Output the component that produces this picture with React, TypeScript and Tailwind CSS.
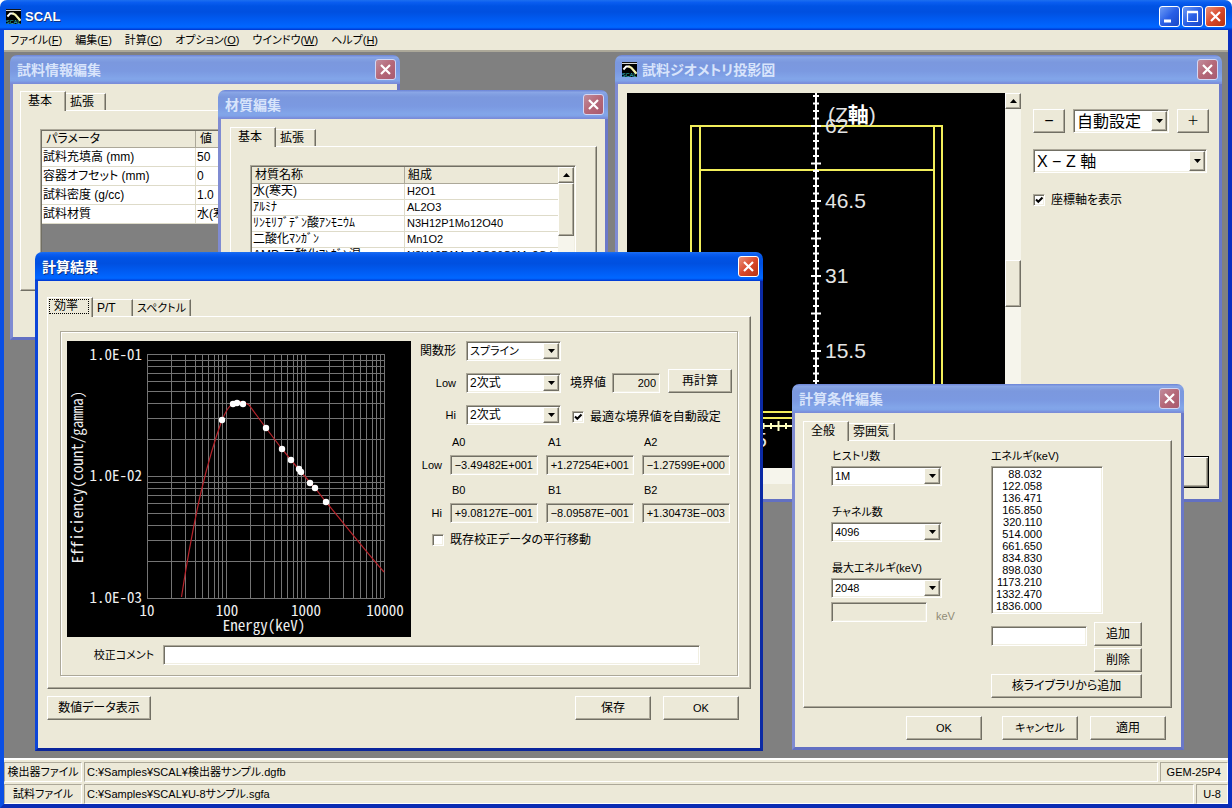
import React, { ReactNode, useState } from "react";

const sunken =
  "border border-t-[#aca899] border-l-[#aca899] border-r-white border-b-white shadow-[inset_1px_1px_0_#716f64,inset_-1px_-1px_0_#f1efe2]";
const raised =
  "border border-t-white border-l-white border-r-[#716f64] border-b-[#716f64] shadow-[inset_-1px_-1px_0_#aca899]";

const activeTitle =
  "bg-[linear-gradient(180deg,#1c6ff0,#0a5df0_8%,#0053e4_20%,#0050e0_40%,#005df5_70%,#0066ff_88%,#0061fa_93%,#003dd7_97%,#003dd7)]";
const inactiveTitle =
  "bg-[linear-gradient(180deg,#6b83d6,#8aa6e6_8%,#82a0e2_14%,#7b98de_25%,#7b99e1_56%,#82a5e9_81%,#80a3e8_89%,#7b92de_95%,#7a8ad6)]";

function CloseGlyph() {
  return (
    <svg viewBox="0 0 19 19" className="size-full" aria-hidden="true">
      <path d="M5 5l9 9M14 5l-9 9" stroke="#fff" strokeWidth="2.2" />
    </svg>
  );
}

function CloseButton({ active }: { active?: boolean }) {
  return (
    <button
      type="button"
      aria-label="閉じる"
      className={
        active
          ? "size-[21px] shrink-0 rounded-[3px] border border-white bg-linear-to-br from-[#e89078] via-[#d9482a] to-[#b8330f]"
          : "size-[21px] shrink-0 rounded-[3px] border border-[#d3d7f4] bg-linear-to-br from-[#c08c9c] via-[#b56878] to-[#a85a70]"
      }
    >
      <CloseGlyph />
    </button>
  );
}

function AppIcon() {
  return (
    <svg viewBox="0 0 16 16" className="size-[15px] shrink-0" aria-hidden="true">
      <rect width="16" height="16" fill="#000" />
      <path d="M0 1.5h16" stroke="#fff" strokeWidth="1" />
      <path d="M1.500 8L4.500 4.800H7.500" stroke="#fff" strokeWidth="2" fill="none" />
      <path d="M7 4.600l3 1.600L15.500 12.500" stroke="#f6f2b0" strokeWidth="2.400" fill="none" />
      <text x="0" y="15.6" fontSize="6" fill="#3fd0d8" fontFamily="Liberation Sans, sans-serif">
        SCAL
      </text>
    </svg>
  );
}

type WinProps = {
  title: string;
  active?: boolean;
  icon?: boolean;
  place: string;
  body: string;
  children: ReactNode;
};

function Win({ title, active, icon, place, body, children }: WinProps) {
  return (
    <section aria-label={title} className={"absolute flex flex-col " + place}>
      <header
        className={
          "flex h-[29px] shrink-0 items-center justify-between rounded-t-[7px] pr-1 pl-[7px] " +
          (active ? activeTitle : inactiveTitle)
        }
      >
        <div className="flex items-center gap-[5px]">
          {icon && <AppIcon />}
          <h2
            className={
              active
                ? "text-sm leading-5 font-bold text-white [text-shadow:1px_1px_#10327e]"
                : "text-sm leading-5 font-bold text-[#d8e4fb]"
            }
          >
            {title}
          </h2>
        </div>
        <CloseButton active={active} />
      </header>
      <div
        className={
          "flex flex-1 border-x-[3px] border-b-[3px] bg-[#ece9d8] " +
          (active
            ? "border-l-[#0c45d8] border-r-[#0b2aa5] border-b-[#0a259c] "
            : "border-l-[#7f8bd2] border-r-[#6a78c8] border-b-[#6270c2] ") +
          body
        }
      >
        {children}
      </div>
    </section>
  );
}

function Tabs({ tabs, focus }: { tabs: { name: string; size: string }[]; focus?: boolean }) {
  return (
    <div role="tablist" className="flex h-[19px] items-end">
      {tabs.map((t, i) => (
        <button
          key={t.name}
          type="button"
          role="tab"
          aria-selected={i === 0}
          className={
            "bg-[#ece9d8] " +
            t.size +
            (i === 0
              ? " relative -mb-px flex h-[20px] items-start border-t border-r border-l border-t-white border-r-[#716f64] border-l-white pt-px shadow-[inset_-1px_0_0_#aca899]"
              : " h-[17px] border-t border-r border-t-white border-r-[#716f64] pl-1 text-left shadow-[inset_-1px_0_0_#aca899]")
          }
        >
          <span
            className={
              i === 0 && focus
                ? "mr-[2px] w-full border border-dotted border-black pl-1 text-left leading-[13px]"
                : i === 0
                  ? "pl-[7px] leading-4"
                  : "leading-4"
            }
          >
            {t.name}
          </span>
        </button>
      ))}
    </div>
  );
}

function Button({ children, size }: { children: ReactNode; size: string }) {
  return (
    <button type="button" className={"h-6 shrink-0 bg-[#ece9d8] leading-5 " + raised + " " + size}>
      {children}
    </button>
  );
}

function Combo({ id, label, options, size, text }: { id: string; label: string; options: string[]; size: string; text: string }) {
  return (
    <div className={"relative bg-white p-[2px] " + sunken + " " + size}>
      <select id={id} aria-label={label} className={"block h-full w-full appearance-none bg-white pl-px outline-none " + text}>
        {options.map((o) => (
          <option key={o}>{o}</option>
        ))}
      </select>
      <span
        aria-hidden="true"
        className={"pointer-events-none absolute top-px right-px bottom-px flex w-4 items-center justify-center bg-[#ece9d8] " + raised}
      >
        <svg viewBox="0 0 7 4" className="h-1 w-[7px]">
          <path d="M0 0h7L3.500 4z" fill="#000" />
        </svg>
      </span>
    </div>
  );
}

function Check({ label, initial }: { label: string; initial?: boolean }) {
  const [on, setOn] = useState(!!initial);
  return (
    <label className="flex h-4 items-center gap-[6px] whitespace-nowrap">
      <span className="relative size-3 shrink-0">
        <input
          type="checkbox"
          checked={on}
          onChange={() => setOn(!on)}
          className={"block size-3 appearance-none bg-white " + sunken}
        />
        {on && (
          <svg viewBox="0 0 12 12" className="pointer-events-none absolute inset-0 size-3" aria-hidden="true">
            <path d="M3 5.500l2.300 2.300L9.500 3.500" stroke="#000" strokeWidth="2" fill="none" />
          </svg>
        )}
      </span>
      {label}
    </label>
  );
}

function UpArrow() {
  return (
    <div className={"flex size-4 shrink-0 items-center justify-center bg-[#ece9d8] " + raised}>
      <svg viewBox="0 0 7 4" className="h-1 w-[7px]" aria-hidden="true">
        <path d="M0 4h7L3.500 0z" fill="#000" />
      </svg>
    </div>
  );
}

function SampleWindow() {
  const rows = [
    ["試料充填高 (mm)", "50"],
    ["容器オフセット (mm)", "0"],
    ["試料密度 (g/cc)", "1.0"],
    ["試料材質", "水(寒天)"],
  ];
  return (
    <Win title="試料情報編集" place="left-[6px] top-[3px] h-[285px] w-[390px]" body="flex-col pt-[7px] pr-[7px] pb-[46px] pl-[7px]">
      <Tabs tabs={[{ name: "基本", size: "w-[46px]" }, { name: "拡張", size: "w-[40px]" }]} />
      <div className={"flex flex-1 pt-[18px] pr-5 pb-5 pl-[19px] " + raised}>
        <div className={"flex-1 bg-[#808080] p-px " + sunken}>
          <table className="w-full table-fixed border-separate border-spacing-0 text-left">
            <thead>
              <tr className="h-[17px] bg-[#ece9d8]">
                <th className="w-[154px] border-r border-b border-[#aca899] py-0 pr-0 pl-1 leading-4 font-normal">パラメータ</th>
                <th className="border-b border-[#aca899] py-0 pr-0 pl-1 leading-4 font-normal">値</th>
              </tr>
            </thead>
            <tbody>
              {rows.map(([k, v]) => (
                <tr key={k} className="h-[19px] bg-white">
                  <td className="border-r border-b border-[#dedbc9] py-0 pr-0 pl-px leading-4">{k}</td>
                  <td className="border-b border-[#dedbc9] py-0 pr-0 pl-px leading-4">{v}</td>
                </tr>
              ))}
            </tbody>
          </table>
        </div>
      </div>
    </Win>
  );
}

function MaterialWindow() {
  const rows = [
    ["水(寒天)", "H2O1"],
    ["ｱﾙﾐﾅ", "AL2O3"],
    ["ﾘﾝﾓﾘﾌﾞﾃﾞﾝ酸ｱﾝﾓﾆｳﾑ", "N3H12P1Mo12O40"],
    ["二酸化ﾏﾝｶﾞﾝ", "Mn1O2"],
    ["AMP-二酸化ﾏﾝｶﾞﾝ混", "N3H12P1Mo12O86C3Mn2O4"],
  ];
  return (
    <Win title="材質編集" place="left-[214px] top-[38px] h-[240px] w-[390px]" body="flex-col pt-2 pr-2 pb-5 pl-[9px]">
      <Tabs tabs={[{ name: "基本", size: "w-[46px]" }, { name: "拡張", size: "w-[40px]" }]} />
      <div className={"flex flex-1 pt-[18px] pr-5 pb-2 pl-[19px] " + raised}>
        <div className={"flex flex-1 items-start bg-white p-px " + sunken}>
          <table className="flex-1 table-fixed border-separate border-spacing-0 text-left">
            <thead>
              <tr className="h-[17px] bg-[#ece9d8]">
                <th className="w-[153px] border-r border-b border-[#aca899] py-0 pr-0 pl-[3px] leading-4 font-normal">材質名称</th>
                <th className="border-b border-[#aca899] py-0 pr-0 pl-[3px] leading-4 font-normal">組成</th>
              </tr>
            </thead>
            <tbody>
              {rows.map(([k, v]) => (
                <tr key={k} className="h-4">
                  <td className="border-r border-b border-[#dedbc9] py-0 pr-0 pl-px leading-[15px] whitespace-nowrap">{k}</td>
                  <td className="border-b border-[#dedbc9] py-0 pr-0 pl-[2px] text-[11px] leading-[15px]">{v}</td>
                </tr>
              ))}
            </tbody>
          </table>
          <div className="flex w-4 flex-col self-stretch bg-[#f6f5ec]">
            <UpArrow />
            <div className={"h-[53px] w-4 bg-[#ece9d8] " + raised} />
          </div>
        </div>
      </div>
    </Win>
  );
}

const ticksZ = Array.from({ length: 45 }, (_, i) => i);
const ticksX = Array.from({ length: 49 }, (_, i) => i - 24);

function Projection() {
  return (
    <svg viewBox="0 0 378 375" className="block h-[375px] w-[378px] bg-black" role="img" aria-label="X-Z 投影図">
      <g stroke="#f2ee5a" strokeWidth="2" fill="none">
        <path d="M64 325V33H315V325Z" />
        <path d="M73 33V319H307V33M73 77H307" />
      </g>
      <g stroke="#fff" strokeWidth="2">
        <path d="M189 0V375" />
        <path d="M0 333H378" stroke="#ffffc0" />
        {ticksZ.map((i) => {
          const y = 333 - i * 7.5;
          const r = i % 5 === 0 ? 5 : 3;
          return <path key={i} d={`M${189 - r} ${y}H${189 + r}`} />;
        })}
        {ticksX.map((i) => {
          const x = 189 + i * 7.5;
          const r = i % 5 === 0 ? 5 : 3;
          return <path key={i} d={`M${x} ${333 - r}V${333 + r}`} stroke="#ffffc0" />;
        })}
      </g>
      <g fill="#e4e4e4" fontSize="21" fontFamily="Liberation Sans, Noto Sans CJK JP, sans-serif">
        <text x="201" y="29">
          (Z
          <tspan fill="#fff" fontWeight="700">軸</tspan>)
        </text>
        <text x="198" y="40">62</text>
        <text x="198" y="115">46.5</text>
        <text x="198" y="190">31</text>
        <text x="198" y="265">15.5</text>
        <text x="140" y="354" textAnchor="end">-15.5</text>
      </g>
    </svg>
  );
}

function GeometryWindow() {
  return (
    <Win title="試料ジオメトリ投影図" icon place="left-[611px] top-[3px] h-[447px] w-[607px]" body="justify-between pt-[9px] pr-[10px] pb-[11px] pl-[9px]">
      <div className="flex flex-col">
        <div className="flex">
          <Projection />
          <div className="flex w-4 flex-col bg-[#f6f5ec]">
            <UpArrow />
            <div className="h-[151px]" />
            <div className={"h-[47px] w-4 bg-[#ece9d8] " + raised} />
          </div>
        </div>
        <div className="flex h-4 w-[378px] justify-center bg-[#f6f5ec]">
          <div className={"w-12 bg-[#ece9d8] " + raised} />
        </div>
      </div>
      <div className="flex w-[176px] flex-col pt-4">
        <div className="flex justify-between">
          <Button size="w-8 text-base">−</Button>
          <Combo id="scale" label="倍率" options={["自動設定"]} size="h-6 w-24" text="text-base leading-5" />
          <Button size="w-8">＋</Button>
        </div>
        <Combo id="plane" label="投影面" options={["X − Z 軸"]} size="mt-4 mr-[2px] h-6" text="text-base leading-5" />
        <div className="mt-[19px]">
          <Check label="座標軸を表示" initial />
        </div>
        <button type="button" className="mt-auto h-8 w-[100px] self-end border border-black bg-[#ece9d8] shadow-[inset_1px_1px_0_#fff,inset_-1px_-1px_0_#716f64,inset_-2px_-2px_0_#aca899]">
          閉じる
        </button>
      </div>
    </Win>
  );
}

const PX = 80;
const PY = 13;
const DX = 79;
const DY = 122;
const decadesX = [0, 1, 2];
const decadesY = [0, 1];
const mantissa = [1, 2, 3, 4, 5, 6, 7, 8, 9];
const points = [
  [155, 79], [166, 63], [170, 62], [176, 63], [199, 87], [215, 108],
  [224, 119], [232, 128], [234, 131], [243, 142], [248, 147], [259, 161],
];

function EfficiencyPlot() {
  return (
    <svg viewBox="0 0 344 296" className="block h-[296px] w-[344px] shrink-0 bg-black" role="img" aria-label="効率曲線">
      <g stroke="#747474" strokeWidth="1" shapeRendering="crispEdges">
        {decadesX.map((d) =>
          mantissa.map((m) => {
            const x = Math.round(PX + DX * (d + Math.log10(m))) + 0.5;
            return <path key={`${d}-${m}`} d={`M${x} ${PY}V${PY + 2 * DY}`} />;
          })
        )}
        {decadesY.map((d) =>
          mantissa.map((m) => {
            const y = Math.round(PY + 2 * DY - DY * (d + Math.log10(m))) + 0.5;
            return <path key={`${d}-${m}`} d={`M${PX} ${y}H${PX + 3 * DX}`} />;
          })
        )}
        <path d={`M${PX} ${PY + 0.5}H${PX + 3 * DX}M${PX + 3 * DX + 0.5} ${PY}V${PY + 2 * DY}`} />
      </g>
      <path
        d="M114.500 256C120 220 127 182 134 151C140 126 148 98 155 79C159 70 163 62 170 61C174 60 178 61 182 64C188 72 193 79 199 87L215 108L224 119L234 131L248 147L259 161C275 180 296 207 317 231"
        stroke="#b8232b"
        strokeWidth="1.200"
        fill="none"
      />
      <g fill="#fff">
        {points.map(([x, y]) => (
          <circle key={x} cx={x} cy={y} r="3.200" />
        ))}
      </g>
      <g
        fill="#f0f0f0"
        fontSize="15"
        fontFamily="Noto Sans CJK JP, sans-serif"
        className="[font-feature-settings:'hwid','liga'_0] [font-variant-ligatures:none]"
      >
        <text x="75" y="19" textAnchor="end">1.0E-01</text>
        <text x="75" y="140" textAnchor="end">1.0E-02</text>
        <text x="75" y="262" textAnchor="end">1.0E-03</text>
        <text x="80" y="275" textAnchor="middle">10</text>
        <text x="160" y="275" textAnchor="middle">100</text>
        <text x="239" y="275" textAnchor="middle">1000</text>
        <text x="318" y="275" textAnchor="middle">10000</text>
        <text x="197" y="290" textAnchor="middle">Energy(keV)</text>
        <text transform="translate(16 136) rotate(-90)" textAnchor="middle">Efficiency(count/gamma)</text>
      </g>
    </svg>
  );
}

function CoefRow({ side, names, values }: { side: string; names: string[]; values: string[] }) {
  return (
    <div className="flex items-end gap-2 text-[11px]">
      <span className="h-[18px] w-[22px] text-right leading-4">{side}</span>
      {names.map((n, i) => (
        <label key={n} className="flex w-[88px] flex-col gap-[5px] leading-4">
          <span className="pl-[2px]">{n}</span>
          <input readOnly value={values[i]} className={"h-5 w-full bg-[#ece9d8] pr-1 text-right outline-none " + sunken} />
        </label>
      ))}
    </div>
  );
}

function ResultWindow() {
  return (
    <Win title="計算結果" active place="left-[31px] top-[200px] w-[728px]" body="flex-col pt-4 pr-[9px] pb-7 pl-[9px]">
      <Tabs
        focus
        tabs={[
          { name: "効率", size: "w-[46px] px-px" },
          { name: "P/T", size: "w-[40px]" },
          { name: "スペクトル", size: "w-[58px] text-[11px]" },
        ]}
      />
      <div className={"px-3 pt-[14px] pb-3 " + raised}>
        <div className="border border-[#aca899] pt-[9px] pr-[5px] pb-[10px] pl-[6px] shadow-[inset_1px_1px_0_#fff,1px_1px_0_#fff]">
          <div className="flex gap-[9px]">
            <EfficiencyPlot />
            <div className="flex flex-1 flex-col">
              <div className="flex flex-col gap-3">
                <div className="flex h-5 items-end gap-[10px]">
                  <label htmlFor="func" className="w-9 text-right leading-5 whitespace-nowrap">関数形</label>
                  <Combo id="func" label="関数形" options={["スプライン"]} size="h-5 w-[95px]" text="text-[11px] leading-[14px]" />
                </div>
                <div className="flex h-5 items-end">
                  <label htmlFor="low" className="mr-[10px] w-9 text-right text-[11px] leading-5">Low</label>
                  <Combo id="low" label="Low" options={["2次式"]} size="h-5 w-[95px]" text="leading-[14px]" />
                  <label htmlFor="bound" className="ml-[9px] w-9 leading-5 whitespace-nowrap">境界値</label>
                  <input id="bound" readOnly value="200" className={"ml-[6px] h-5 w-12 bg-[#ece9d8] pr-[3px] text-right text-[11px] outline-none " + sunken} />
                  <Button size="ml-2 w-16">再計算</Button>
                </div>
                <div className="flex h-5 items-end">
                  <label htmlFor="hi" className="mr-[10px] w-9 text-right text-[11px] leading-5">Hi</label>
                  <Combo id="hi" label="Hi" options={["2次式"]} size="h-5 w-[95px]" text="leading-[14px]" />
                  <div className="ml-[11px]">
                    <Check label="最適な境界値を自動設定" initial />
                  </div>
                </div>
              </div>
              <div className="mt-[9px] flex flex-col gap-[7px]">
                <CoefRow side="Low" names={["A0", "A1", "A2"]} values={["−3.49482E+001", "+1.27254E+001", "−1.27599E+000"]} />
                <CoefRow side="Hi" names={["B0", "B1", "B2"]} values={["+9.08127E−001", "−8.09587E−001", "+1.30473E−003"]} />
              </div>
              <div className="mt-[9px] pl-3">
                <Check label="既存校正データの平行移動" />
              </div>
            </div>
          </div>
          <div className="mt-2 flex items-center gap-[9px]">
            <label htmlFor="comment" className="w-[87px] text-right text-[11px] leading-5">校正コメント</label>
            <input id="comment" className={"mr-8 h-5 flex-1 bg-white px-1 outline-none " + sunken} />
          </div>
        </div>
      </div>
      <div className="mt-[7px] flex justify-between pr-3">
        <Button size="w-[104px]">数値データ表示</Button>
        <div className="flex gap-3">
          <Button size="w-[76px]">保存</Button>
          <Button size="w-[76px] text-[11px]">OK</Button>
        </div>
      </div>
    </Win>
  );
}

const energies = [
  "88.032", "122.058", "136.471", "165.850", "320.110", "514.000",
  "661.650", "834.830", "898.030", "1173.210", "1332.470", "1836.000",
];

function Field({ id, label, value }: { id: string; label: string; value: string }) {
  return (
    <div className="flex flex-col gap-[2px]">
      <label htmlFor={id} className="pl-px text-[11px] leading-4 whitespace-nowrap">{label}</label>
      <Combo id={id} label={label} options={[value]} size="h-5" text="text-[11px] leading-[14px]" />
    </div>
  );
}

function ConditionWindow() {
  return (
    <Win title="計算条件編集" place="left-[788px] top-[332px] w-[392px]" body="flex-col pt-2 pr-[9px] pb-[7px] pl-2">
      <Tabs tabs={[{ name: "全般", size: "w-[46px]" }, { name: "雰囲気", size: "w-[46px]" }]} />
      <div className={"flex justify-between pt-[7px] pr-[29px] pb-[9px] pl-[27px] " + raised}>
        <div className="flex w-[111px] flex-col gap-[18px]">
          <Field id="history" label="ヒストリ数" value="1M" />
          <Field id="channel" label="チャネル数" value="4096" />
          <div className="flex flex-col gap-1">
            <Field id="maxe" label="最大エネルギ(keV)" value="2048" />
            <label className="flex items-end gap-[9px] text-[11px] leading-3 text-[#8f8b76]">
              <input disabled className={"h-5 w-24 shrink-0 bg-[#ece9d8] " + sunken} />
              keV
            </label>
          </div>
        </div>
        <div className="flex w-[151px] flex-col">
          <label htmlFor="energies" className="mb-[2px] text-[11px] leading-4">エネルギ(keV)</label>
          <select
            id="energies"
            size={12}
            className={"h-[148px] w-28 appearance-none overflow-hidden bg-white p-px text-[11px] outline-none " + sunken}
          >
            {energies.map((e) => (
              <option key={e} className="block h-3 min-h-0 w-[49px] p-0 text-right leading-3">
                {e}
              </option>
            ))}
          </select>
          <div className="mt-2 flex flex-col items-end gap-[2px]">
            <div className="flex w-full items-end justify-between">
              <input aria-label="エネルギ" className={"h-5 w-24 bg-white px-1 outline-none " + sunken} />
              <Button size="w-12">追加</Button>
            </div>
            <Button size="w-12">削除</Button>
            <Button size="w-full">核ライブラリから追加</Button>
          </div>
        </div>
      </div>
      <div className="mt-2 flex justify-end gap-3 pr-[6px]">
        <Button size="mr-2 w-[76px] text-[11px]">OK</Button>
        <Button size="w-[76px] text-[11px]">キャンセル</Button>
        <Button size="w-[76px]">適用</Button>
      </div>
    </Win>
  );
}

function StatusRow({ name, path, tail, tailSize }: { name: string; path: string; tail: string; tailSize: string }) {
  const cell = "border border-t-[#aca899] border-l-[#aca899] border-r-white border-b-white leading-[18px]";
  return (
    <div className="flex h-[22px] gap-[2px] pt-[2px] text-[11px]">
      <span className={"w-[78px] text-center whitespace-nowrap " + cell}>{name}</span>
      <span className={"flex-1 pl-[2px] " + cell}>{path}</span>
      <span className={"pr-[6px] text-right " + cell + " " + tailSize}>{tail}</span>
    </div>
  );
}

const menus = [
  ["ファイル", "F"], ["編集", "E"], ["計算", "C"], ["オプション", "O"], ["ウインドウ", "W"], ["ヘルプ", "H"],
];

export default function App() {
  const box = "size-[21px] rounded-[3px] border border-white bg-linear-to-br from-[#6f9bf5] via-[#2a5fe6] to-[#1a48c8]";
  return (
    <div className="flex h-screen flex-col overflow-hidden rounded-t-[7px] bg-[#ece9d8] font-['Liberation_Sans','Noto_Sans_CJK_JP',sans-serif] text-xs text-black [font-feature-settings:'palt']">
      <header className={"flex h-[30px] shrink-0 items-center justify-between pt-[3px] pr-[6px] pl-[6px] " + activeTitle}>
        <div className="flex items-center gap-1">
          <AppIcon />
          <h1 className="text-[13px] leading-5 font-bold text-white [text-shadow:1px_1px_#10327e]">SCAL</h1>
        </div>
        <div className="flex gap-[2px]">
          <button type="button" aria-label="最小化" className={box}>
            <svg viewBox="0 0 19 19" className="size-full" aria-hidden="true">
              <path d="M4 14h7" stroke="#fff" strokeWidth="3" />
            </svg>
          </button>
          <button type="button" aria-label="最大化" className={box}>
            <svg viewBox="0 0 19 19" className="size-full" aria-hidden="true">
              <path d="M4.500 5v9.500h10V5M4 5.500h11" stroke="#fff" strokeWidth="1.200" fill="none" />
              <path d="M4 5h11" stroke="#fff" strokeWidth="2.600" />
            </svg>
          </button>
          <CloseButton active />
        </div>
      </header>
      <div className="flex min-h-0 flex-1 flex-col border-x-4 border-b-4 border-l-[#0a4fe4] border-r-[#0a2fc0] border-b-[#0a2cb4]">
        <nav className="flex h-5 shrink-0 items-center gap-[13px] pl-[6px] text-[11px] leading-4">
          {menus.map(([n, k]) => (
            <button key={n} type="button" className="whitespace-nowrap">
              {n}(<span className="underline">{k}</span>)
            </button>
          ))}
        </nav>
        <main className="relative min-h-0 flex-1 overflow-hidden border-t-2 border-[#aca899] bg-[#808080]">
          <SampleWindow />
          <GeometryWindow />
          <MaterialWindow />
          <ResultWindow />
          <ConditionWindow />
        </main>
        <footer className="shrink-0 border-t-2 border-white">
          <StatusRow name="検出器ファイル" path="C:¥Samples¥SCAL¥検出器サンプル.dgfb" tail="GEM-25P4" tailSize="w-[68px]" />
          <StatusRow name="試料ファイル" path="C:¥Samples¥SCAL¥U-8サンプル.sgfa" tail="U-8" tailSize="w-8" />
        </footer>
      </div>
    </div>
  );
}
